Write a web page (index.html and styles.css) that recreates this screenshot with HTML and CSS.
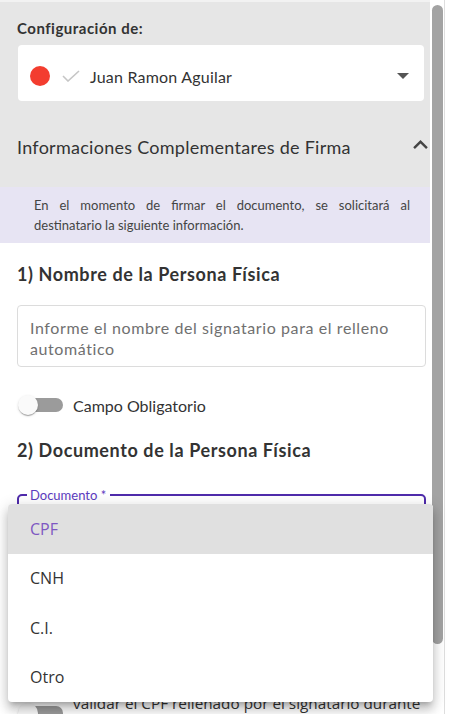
FILE: index.html
```html
<!DOCTYPE html>
<html lang="es">
<head>
<meta charset="utf-8">
<title>Configuración</title>
<link rel="stylesheet" href="styles.css">
</head>
<body>
<div class="frame">
  <div class="scroller">
    <div class="page">
      <div class="top-strip"></div>
      <section class="config">
        <div class="config-label">Configuración de:</div>
        <div class="select">
          <span class="dot"></span>
          <svg class="check" width="18" height="12" viewBox="0 0 18 12"><polyline points="1,6 6,11 17,1" fill="none" stroke="#c6c6c6" stroke-width="1.6"/></svg>
          <span class="name">Juan Ramon Aguilar</span>
          <svg class="caret" width="12" height="6" viewBox="7 10 10 5"><path d="M7 10l5 5 5-5z" fill="#555"/></svg>
        </div>
        <div class="summary">
          <span>Informaciones Complementares de Firma</span>
          <svg class="chev" width="15" height="9" viewBox="6 8 12 7.41"><path d="M12 8l-6 6 1.41 1.41L12 10.83l4.59 4.58L18 14z" fill="#444"/></svg>
        </div>
      </section>
      <div class="info">En el momento de firmar el documento, se solicitará al destinatario la siguiente información.</div>
      <section class="form">
        <h3>1) Nombre de la Persona Física</h3>
        <div class="textarea">Informe el nombre del signatario para el relleno automático</div>
        <div class="switch-row first">
          <span class="switch"><span class="track"></span><span class="thumb"></span></span>
          <span>Campo Obligatorio</span>
        </div>
        <h3 class="h-doc">2) Documento de la Persona Física</h3>
        <div class="outlined">
          <span class="legend">Documento *</span>
        </div>
        <div class="switch-row second">
          <span class="switch"><span class="track"></span><span class="thumb"></span></span>
          <span class="long">validar el CPF rellenado por el signatario durante la firma</span>
        </div>
      </section>
    </div>
  </div>
  <div class="vscroll"><div class="vthumb"></div></div>
  <div class="edge"></div>
  <ul class="menu">
    <li class="sel">CPF</li>
    <li>CNH</li>
    <li>C.I.</li>
    <li>Otro</li>
  </ul>
</div>
</body>
</html>
```

FILE: styles.css
```css
* { box-sizing: border-box; }
html, body { margin: 0; padding: 0; }
body {
  width: 449px;
  height: 714px;
  overflow: hidden;
  background: #fff;
  font-family: Lato, "Open Sans", sans-serif;
  color: #333;
}
.frame { position: relative; display: flex; height: 714px; }
.scroller { width: 430px; height: 714px; overflow: hidden; background: #fff; flex: none; }
.vscroll { width: 14px; flex: none; background: #fff; padding: 5px 1px 0 2px; }
.vthumb { height: 639px; background: #a3a3a3; border-radius: 6px; }
.edge { width: 5px; flex: none; border-left: 1px solid #dedede; background: #fff; }

.top-strip { height: 2px; background: #f2f2f2; }
.config { background: #e6e6e6; padding: 16px 0 0 17px; }
.config-label { font-weight: 700; font-size: 15px; letter-spacing: 0.5px; line-height: 20px; color: #333; }
.select {
  margin: 7px 6px 0 1px;
  height: 56px;
  background: #fff;
  border-radius: 4px;
  display: flex;
  align-items: center;
  padding: 6px 15px 0 12px;
}
.dot { width: 20px; height: 20px; border-radius: 50%; background: #f33d2f; flex: none; }
.check { margin-left: 12px; flex: none; }
.name { margin-left: 10px; font-size: 16px; letter-spacing: 0.2px; color: #333; }
.caret { margin-left: auto; flex: none; }
.summary {
  display: flex;
  align-items: center;
  justify-content: space-between;
  padding: 35px 2px 29px 0;
  font-size: 18px;
  letter-spacing: 0.27px;
  line-height: 22px;
  color: #333;
}
.chev { margin-bottom: 5px; }

.info {
  background: #e7e4f3;
  padding: 8px 20px 8px 34px;
  font-size: 13px;
  line-height: 20px;
  text-align: justify;
  color: #444;
}

.form { padding: 20px 4px 54px 17px; }
.form h3 { margin: 0; font-size: 18px; letter-spacing: 0.6px; line-height: 22px; font-weight: 700; color: #333; }
.textarea {
  margin-top: 20px;
  border: 1px solid #dcdcdc;
  border-radius: 4px;
  padding: 11px 12px 7px;
  font-size: 16px;
  letter-spacing: 0.6px;
  line-height: 21px;
  color: #707070;
}
.switch-row { display: flex; align-items: center; gap: 10px; min-height: 38px; font-size: 16px; color: #333; }
.switch-row.first { margin-top: 19px; }
.switch-row.second { margin-top: 143px; line-height: 20px; font-family: "Open Sans", sans-serif; font-size: 15.3px; }
.long { max-width: 348px; }
.switch { display: grid; align-items: center; width: 46px; height: 38px; flex: none; }
.switch > span { grid-area: 1 / 1; }
.track { margin-left: 12px; width: 34px; height: 14px; border-radius: 7px; background: #9b9b9b; }
.thumb {
  margin-left: 1px;
  width: 20px;
  height: 20px;
  border-radius: 50%;
  background: #fafafa;
  box-shadow: 0 2px 1px -1px rgba(0,0,0,.2), 0 1px 1px 0 rgba(0,0,0,.14), 0 1px 3px 0 rgba(0,0,0,.12);
}
.form h3.h-doc { margin-top: 15px; }
.outlined {
  position: relative;
  margin-top: 33px;
  height: 56px;
  border: 2px solid #4f2bab;
  border-radius: 5px;
}
.legend {
  position: absolute;
  top: -9px;
  left: 8px;
  padding: 0 4px 0 3px;
  background: #fff;
  font-size: 13px;
  line-height: 16px;
  color: #5c3cc0;
}

.menu {
  position: absolute;
  left: 8px;
  top: 504px;
  width: 425px;
  margin: 0;
  padding: 0;
  list-style: none;
  background: #fff;
  border-radius: 4px;
  overflow: hidden;
  box-shadow: 0 5px 5px -3px rgba(0,0,0,.2), 0 8px 10px 1px rgba(0,0,0,.14), 0 3px 14px 2px rgba(0,0,0,.12);
  font-family: "Open Sans", sans-serif;
  font-size: 16px;
}
.menu li { height: 49.5px; display: flex; align-items: center; padding-left: 22px; color: #333; }
.menu li.sel { background: #e0e0e0; color: #7e57c2; }
```
